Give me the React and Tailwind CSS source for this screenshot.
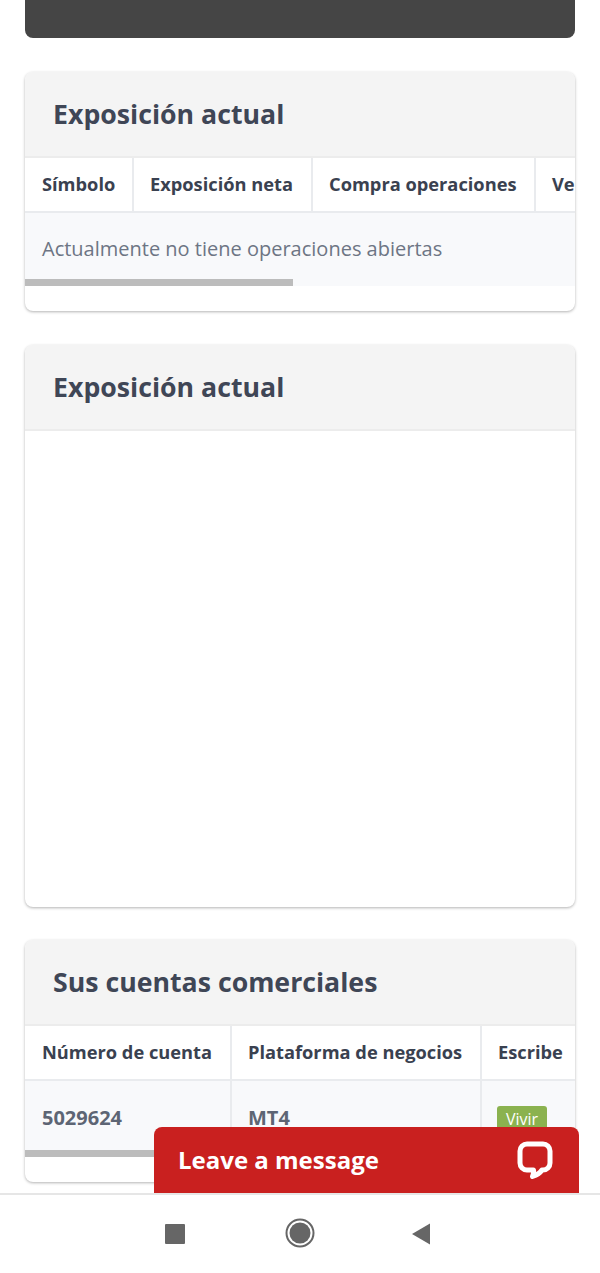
import React from "react";

const font = { fontFamily: '"Open Sans", sans-serif' };

function Card({ title, bodyClass, children }) {
  return (
    <section className={`rounded-lg bg-white shadow-[0_1px_3px_rgba(0,0,0,0.3)] overflow-hidden ${bodyClass}`}>
      <h2 className="h-[86px] pl-[28px] pt-[24px] bg-[#f4f4f4] border-b-2 border-[#ececec] text-[26.7px] leading-[35px] font-bold text-[#3f4656]">
        {title}
      </h2>
      {children}
    </section>
  );
}

function Scrollbar({ width }) {
  return (
    <div className={`absolute left-0 bottom-0 h-[7px] bg-[#bcbcbc] ${width}`} />
  );
}

function Th({ cls, children }) {
  return (
    <th className={`${cls} h-[54px] pb-[2px] text-left whitespace-nowrap text-[18.25px] font-bold text-[#3a4150] border-r-2 border-b-2 border-[#e9ebee]`}>
      {children}
    </th>
  );
}

export default function App() {
  return (
    <div style={font} className="relative w-[600px] h-[1273px] overflow-hidden bg-white">
      <div className="px-[25px]">
        <div className="h-[38px] bg-[#454545] rounded-b-lg" />

        {/* current exposure table */}
        <div className="mt-[34px]">
          <Card title="Exposición actual" bodyClass="h-[239px]">
            <div className="relative overflow-hidden h-[128px]">
              <table className="table-fixed border-collapse w-[700px]">
                <thead>
                  <tr>
                    <Th cls="w-[108px] pl-[17px]">Símbolo</Th>
                    <Th cls="w-[179px] pl-[16px]">Exposición neta</Th>
                    <Th cls="w-[223px] pl-[16px]">Compra operaciones</Th>
                    <Th cls="w-[190px] pl-[16px]">Venta operaciones</Th>
                  </tr>
                </thead>
                <tbody>
                  <tr>
                    <td colSpan={4} className="h-[75px] pl-[17px] pb-[2px] bg-[#f8f9fb] text-[20px] text-[#6d7584]">
                      Actualmente no tiene operaciones abiertas
                    </td>
                  </tr>
                </tbody>
              </table>
              <Scrollbar width="w-[268px]" />
            </div>
          </Card>
        </div>

        {/* chart placeholder */}
        <div className="mt-[34px]">
          <Card title="Exposición actual" bodyClass="h-[562px]" />
        </div>

        {/* accounts */}
        <div className="mt-[33px]">
          <Card title="Sus cuentas comerciales" bodyClass="h-[242px]">
            <div className="relative overflow-hidden h-[131px]">
              <table className="table-fixed border-collapse w-[700px]">
                <thead>
                  <tr>
                    <Th cls="w-[206px] pl-[17px]">Número de cuenta</Th>
                    <Th cls="w-[250px] pl-[16px]">Plataforma de negocios</Th>
                    <Th cls="w-[244px] pl-[16px]">Escribe</Th>
                  </tr>
                </thead>
                <tbody>
                  <tr className="bg-[#f8f9fb] text-[20px] font-bold text-[#5d6574]">
                    <td className="h-[77px] pl-[17px] pb-[3px] border-r-2 border-[#e9ebee]">5029624</td>
                    <td className="pl-[16px] pb-[3px] border-r-2 border-[#e9ebee]">MT4</td>
                    <td className="pl-[15px] pb-[3px]">
                      <span className="inline-block rounded-[3px] bg-[#8bb24f] px-[9px] text-[16px] leading-[26px] font-normal text-white">
                        Vivir
                      </span>
                    </td>
                  </tr>
                </tbody>
              </table>
              <Scrollbar width="w-[268px]" />
            </div>
          </Card>
        </div>
      </div>

      {/* Android nav bar */}
      <nav className="mt-[11px] h-[80px] border-t-2 border-[#e6e6e6] bg-white flex items-start justify-center">
        <div className="relative w-[300px] h-full">
          <svg className="absolute left-[14px] top-[28px]" width="22" height="22" viewBox="0 0 22 22">
            <rect x="1" y="1" width="20" height="20" rx="1" fill="#666666" />
          </svg>
          <svg className="absolute left-[134px] top-[22px]" width="32" height="32" viewBox="0 0 32 32">
            <circle cx="16" cy="16" r="13.5" fill="none" stroke="#666666" strokeWidth="2" />
            <circle cx="16" cy="16" r="10.5" fill="#666666" />
          </svg>
          <svg className="absolute left-[261px] top-[27px]" width="20" height="24" viewBox="0 0 20 24">
            <path d="M1 12 L19 1.500 V22.500 Z" fill="#666666" />
          </svg>
        </div>
      </nav>

      {/* chat widget */}
      <div className="absolute left-[154px] top-[1127px] w-[425px] h-[66px] rounded-t-lg bg-[#c9201f] flex items-center justify-between pl-[24px] pr-[26px] pb-[1px]">
        <span className="text-[24px] font-bold text-white">Leave a message</span>
        <svg width="36" height="38" viewBox="0 0 36 38">
          <path d="M10 3 H26 A7 7 0 0 1 33 10 V22 A7 7 0 0 1 26 29 H25 C23 32 20 34 15.500 35.500 C16.500 33 17 31 16.500 29 H10 A7 7 0 0 1 3 22 V10 A7 7 0 0 1 10 3 Z" fill="none" stroke="#ffffff" strokeWidth="5" strokeLinejoin="round" />
        </svg>
      </div>
    </div>
  );
}
